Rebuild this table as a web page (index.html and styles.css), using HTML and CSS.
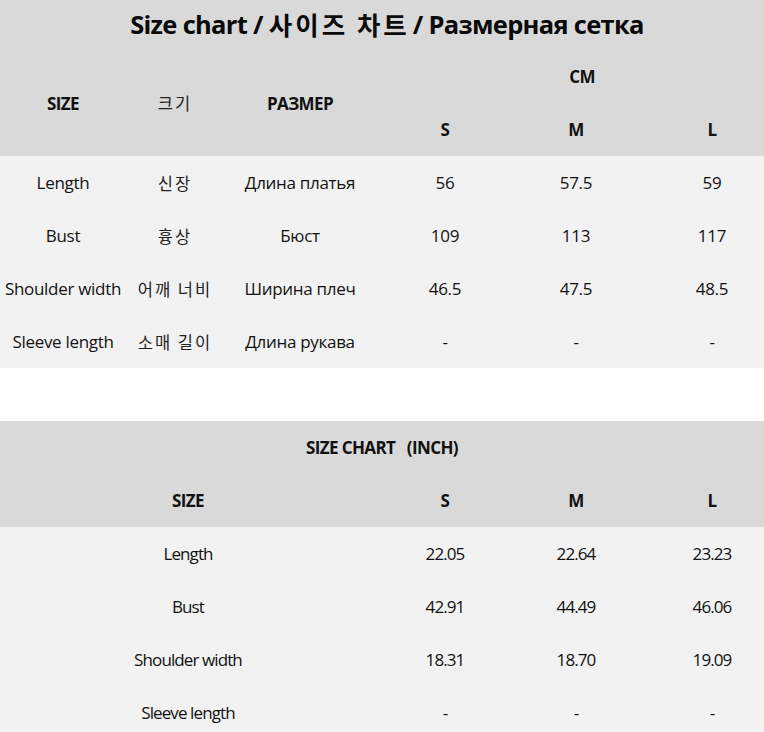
FILE: index.html
```html
<!DOCTYPE html>
<html lang="en">
<head>
<meta charset="utf-8">
<title>Size chart</title>
<link rel="stylesheet" href="styles.css">
</head>
<body>
<section class="chart cm">
  <div class="head">
    <h1 class="title">Size chart / <span class="ko-t">사이즈 차트</span> / Размерная сетка</h1>
    <div class="grid cm-grid">
      <div class="cell b span2 c1">SIZE</div>
      <div class="cell span2 c2 ko">크기</div>
      <div class="cell b span2 c3">РАЗМЕР</div>
      <div class="cell b unit">CM</div>
      <div class="cell b">S</div>
      <div class="cell b">M</div>
      <div class="cell b last">L</div>
    </div>
  </div>
  <div class="grid cm-grid body">
    <div class="cell">Length</div><div class="cell ko">신장</div><div class="cell">Длина платья</div><div class="cell">56</div><div class="cell">57.5</div><div class="cell last">59</div>
    <div class="cell">Bust</div><div class="cell ko">흉상</div><div class="cell">Бюст</div><div class="cell">109</div><div class="cell">113</div><div class="cell last">117</div>
    <div class="cell">Shoulder width</div><div class="cell ko">어깨 너비</div><div class="cell">Ширина плеч</div><div class="cell">46.5</div><div class="cell">47.5</div><div class="cell last">48.5</div>
    <div class="cell">Sleeve length</div><div class="cell ko">소매 길이</div><div class="cell">Длина рукава</div><div class="cell">-</div><div class="cell">-</div><div class="cell last">-</div>
  </div>
</section>

<section class="chart inch">
  <div class="head">
    <div class="grid in-grid">
      <div class="cell b full">SIZE CHART&nbsp;&nbsp;&nbsp;(INCH)</div>
      <div class="cell b">SIZE</div>
      <div class="cell b">S</div>
      <div class="cell b">M</div>
      <div class="cell b last">L</div>
    </div>
  </div>
  <div class="grid in-grid body narrow">
    <div class="cell">Length</div><div class="cell">22.05</div><div class="cell">22.64</div><div class="cell last">23.23</div>
    <div class="cell">Bust</div><div class="cell">42.91</div><div class="cell">44.49</div><div class="cell last">46.06</div>
    <div class="cell">Shoulder width</div><div class="cell">18.31</div><div class="cell">18.70</div><div class="cell last">19.09</div>
    <div class="cell">Sleeve length</div><div class="cell">-</div><div class="cell">-</div><div class="cell last">-</div>
  </div>
</section>
</body>
</html>
```

FILE: styles.css
```css
html, body {
  margin: 0;
  padding: 0;
  background: #ffffff;
}
body {
  width: 764px;
  height: 732px;
  overflow: hidden;
  font-family: "Open Sans", "Noto Sans CJK KR", sans-serif;
  font-size: 17px;
  color: #111111;
}
.chart .head {
  background: #d9d9d9;
}
.chart .body {
  background: #f2f2f2;
}
.inch {
  margin-top: 53px;
}
.title {
  margin: 0;
  height: 50px;
  padding-bottom: 3px;
  padding-left: 10px;
  box-sizing: border-box;
  display: flex;
  align-items: center;
  justify-content: center;
  font-size: 25.5px;
  font-weight: 700;
  letter-spacing: -0.7px;
  color: #0a0a0a;
  white-space: pre;
}
.ko-t {
  font-family: "Noto Sans CJK KR", sans-serif;
  font-weight: 700;
  letter-spacing: 3px;
  margin-right: -3px;
}
.grid {
  display: grid;
  grid-auto-rows: 53px;
}
.cm-grid {
  grid-template-columns: 126px 98px 152px 138px 124px 1fr;
}
.in-grid {
  grid-template-columns: 376px 138px 124px 1fr;
}
.cell {
  display: flex;
  align-items: center;
  justify-content: center;
  white-space: nowrap;
  letter-spacing: -0.3px;
}
.cell.last {
  padding-left: 22px;
}
.b {
  font-weight: 700;
  font-size: 17px;
  letter-spacing: -0.6px;
}
.ko {
  font-family: "Noto Sans CJK KR", sans-serif;
  font-weight: 400;
  font-size: 16.5px;
  letter-spacing: 2px;
  color: #222222;
}
.span2 {
  grid-row: span 2;
}
.unit {
  grid-column: 4 / span 3;
  padding-left: 24px;
}
.c1 { grid-column: 1; }
.c2 { grid-column: 2; }
.c3 { grid-column: 3; }
.full {
  grid-column: 1 / -1;
}
.narrow .cell {
  letter-spacing: -0.9px;
}
```
